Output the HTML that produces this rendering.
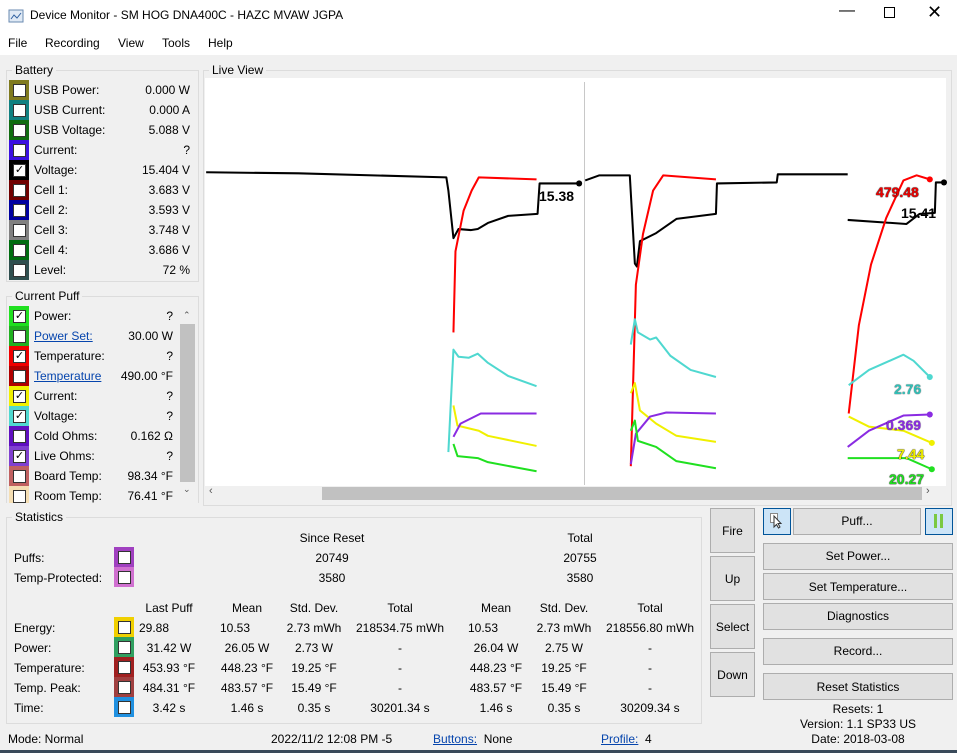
<!DOCTYPE html>
<html><head><meta charset="utf-8"><style>
*{box-sizing:border-box;margin:0;padding:0}
body{width:957px;height:753px;background:#f0f0f0;font-family:"Liberation Sans",sans-serif;font-size:12px;color:#000;position:relative;overflow:hidden}
.a{position:absolute;white-space:nowrap}
.r{text-align:right}
.c{text-align:center}
.grp{position:absolute;border:1px solid #dcdcdc}
.sw{position:absolute;width:20px;height:20px}
.sw i{position:absolute;left:4px;top:4px;width:13px;height:13px;background:#fff;border:1px solid #333;font-style:normal;font-size:11px;line-height:11px;text-align:center}
.lnk{color:#0645ad;text-decoration:underline}
.btn{position:absolute;background:#e1e1e1;border:1px solid #adadad;text-align:center}
.lbl{font-weight:bold;font-size:14px}
</style></head><body>
<div class="a" style="left:0;top:0;width:957px;height:31px;background:#fff"></div>
<svg class="a" style="left:8px;top:8px" width="16" height="16"><rect x="1" y="2" width="14" height="12" fill="#dfe9f5" stroke="#6a8ab0"/><polyline points="3,11 6,7 9,10 13,5" fill="none" stroke="#3060a0"/></svg>
<div class="a" style="left:30px;top:8px;font-size:12px">Device Monitor - SM HOG DNA400C - HAZC MVAW JGPA</div>
<div class="a" style="left:839px;top:2px;font-size:16px">&#8212;</div>
<div class="a" style="left:884px;top:7px;width:11px;height:11px;border:1px solid #000"></div>
<div class="a" style="left:927px;top:2px;font-size:18px">&#10005;</div>
<div class="a" style="left:0;top:31px;width:957px;height:24px;background:#fff"></div>
<div class="a" style="left:8px;top:36px">File</div>
<div class="a" style="left:45px;top:36px">Recording</div>
<div class="a" style="left:118px;top:36px">View</div>
<div class="a" style="left:162px;top:36px">Tools</div>
<div class="a" style="left:208px;top:36px">Help</div>

<div class="grp" style="left:6px;top:70px;width:193px;height:212px"></div>
<div class="a" style="left:12px;top:63px;background:#f0f0f0;padding:0 3px">Battery</div>
<div class="grp" style="left:6px;top:296px;width:193px;height:210px"></div>
<div class="a" style="left:12px;top:289px;background:#f0f0f0;padding:0 3px">Current Puff</div>
<div class="a" style="left:180px;top:309px;width:15px;height:196px;background:#f0f0f0"></div>
<div class="a" style="left:180px;top:324px;width:15px;height:158px;background:#c1c1c1"></div>
<div class="a" style="left:183px;top:310px;font-size:9px;color:#555">&#8963;</div>
<div class="a" style="left:183px;top:484px;font-size:9px;color:#555">&#8964;</div>

<div id="bat"></div>

<div class="grp" style="left:203px;top:70px;width:749px;height:436px"></div>
<div class="a" style="left:209px;top:63px;background:#f0f0f0;padding:0 3px">Live View</div>
<div class="a" style="left:205px;top:78px;width:741px;height:408px;background:#fff"></div>
<div class="a" style="left:205px;top:486px;width:741px;height:16px;background:#f0f0f0"></div>
<div class="a" style="left:322px;top:487px;width:600px;height:13px;background:#c1c1c1"></div>
<div class="a" style="left:209px;top:485px;font-size:11px;color:#555">&#8249;</div>
<div class="a" style="left:926px;top:485px;font-size:11px;color:#555">&#8250;</div>
<svg class="a" style="left:0;top:0" width="957" height="486">
<line x1="584.5" y1="82" x2="584.5" y2="485" stroke="#c8c8c8"/>
<g transform="translate(420,150) scale(1.0135) translate(-420,-150)">
<g fill="none" stroke-width="2" stroke-linejoin="round">
<polyline stroke="#000" points="209,172 300,173 446,177 448,190 453,237 458,228 470,229 477,228 487,222 507,215 536,213 538,183 577,183"/>
<polyline stroke="#000" points="583,180 597,175 627,175 632,262 634,265 637,240 653,232 673,218 712,213 713,183 772,182 773,174 842,174"/>
<polyline stroke="#000" points="842,219 900,223 913,213 928,212 929,182 937,182"/>
<polyline stroke="#f00" points="453,330 455,250 463,210 471,190 478,177 535,179"/>
<polyline stroke="#f00" points="628,462 633,283 640,233 650,190 660,175 712,179"/>
<polyline stroke="#f00" points="843,410 853,323 865,263 880,217 897,180 910,175 923,179"/>
<polyline stroke="#4fd8d0" points="448,448 453,347 458,354 468,355 477,351 487,360 507,373 535,383"/>
<polyline stroke="#4fd8d0" points="628,342 632,317 635,330 647,337 653,335 667,353 687,367 712,374"/>
<polyline stroke="#4fd8d0" points="843,382 863,367 897,352 907,358 923,374"/>
<polyline stroke="#f0f000" points="453,402 457,422 478,427 487,432 535,442"/>
<polyline stroke="#f0f000" points="628,390 632,380 637,407 653,420 673,432 712,438"/>
<polyline stroke="#f0f000" points="843,413 863,423 897,427 925,439"/>
<polyline stroke="#8a2be2" points="453,433 460,420 480,410 535,410"/>
<polyline stroke="#8a2be2" points="628,460 633,430 647,413 663,409 712,410"/>
<polyline stroke="#8a2be2" points="842,443 863,427 897,412 923,411"/>
<polyline stroke="#20e020" points="453,440 457,452 477,454 487,458 535,467"/>
<polyline stroke="#20e020" points="628,427 632,417 635,437 653,443 673,457 712,464"/>
<polyline stroke="#20e020" points="842,454 900,454 925,465"/>
</g>
<circle cx="577" cy="183" r="3"/><circle cx="923" cy="179" r="3" fill="#f00"/><circle cx="937" cy="182" r="3"/>
<circle cx="923" cy="374" r="3" fill="#4fd8d0"/><circle cx="925" cy="439" r="3" fill="#f0f000"/><circle cx="923" cy="411" r="3" fill="#8a2be2"/><circle cx="925" cy="465" r="3" fill="#20e020"/>
</g>
</svg>
<div class="a lbl" style="left:539px;top:188px">15.38</div>
<div class="a lbl" style="left:876px;top:184px;color:#e00;text-shadow:0 0 1px #000,0 0 1px #000">479.48</div>
<div class="a lbl" style="left:901px;top:205px">15.41</div>
<div class="a lbl" style="left:894px;top:381px;color:#30c0b8;text-shadow:0 0 1px #000">2.76</div>
<div class="a lbl" style="left:886px;top:417px;color:#8a2be2;text-shadow:0 0 1px #000">0.369</div>
<div class="a lbl" style="left:897px;top:446px;color:#f0f000;text-shadow:0 0 1px #000,0 0 1px #000">7.44</div>
<div class="a lbl" style="left:889px;top:471px;color:#20e020;text-shadow:0 0 1px #000,0 0 1px #000">20.27</div>

<div class="grp" style="left:6px;top:517px;width:696px;height:207px"></div>
<div class="a" style="left:12px;top:510px;background:#f0f0f0;padding:0 3px">Statistics</div>
<div id="st"></div>

<div class="btn" style="left:710px;top:508px;width:45px;height:45px;line-height:44px">Fire</div>
<div class="btn" style="left:710px;top:556px;width:45px;height:45px;line-height:44px">Up</div>
<div class="btn" style="left:710px;top:604px;width:45px;height:45px;line-height:44px">Select</div>
<div class="btn" style="left:710px;top:652px;width:45px;height:45px;line-height:44px">Down</div>
<div class="btn" style="left:763px;top:508px;width:28px;height:27px;background:#cce4f7;border-color:#005499"></div>
<svg class="a" style="left:770px;top:513px" width="14" height="16"><rect x="0.5" y="0.5" width="7" height="9" fill="#fff" stroke="#888"/><path d="M4 3 L4 14 L6.5 11.5 L8.5 15 L10 14 L8 10.5 L11 10.5 Z" fill="#fff" stroke="#333"/></svg>
<div class="btn" style="left:793px;top:508px;width:128px;height:27px;line-height:25px">Puff...</div>
<div class="btn" style="left:925px;top:508px;width:28px;height:27px;background:#cce4f7;border-color:#005499"></div>
<div class="a" style="left:934px;top:514px;width:3px;height:14px;background:#7ac943"></div>
<div class="a" style="left:940px;top:514px;width:3px;height:14px;background:#7ac943"></div>
<div class="btn" style="left:763px;top:543px;width:190px;height:27px;line-height:25px">Set Power...</div>
<div class="btn" style="left:763px;top:573px;width:190px;height:27px;line-height:27px">Set Temperature...</div>
<div class="btn" style="left:763px;top:603px;width:190px;height:27px;line-height:25px">Diagnostics</div>
<div class="btn" style="left:763px;top:638px;width:190px;height:27px;line-height:25px">Record...</div>
<div class="btn" style="left:763px;top:673px;width:190px;height:27px;line-height:27px">Reset Statistics</div>
<div class="a c" style="left:763px;top:702px;width:190px;line-height:15px">Resets: 1<br>Version: 1.1 SP33 US<br>Date: 2018-03-08</div>

<div class="a" style="left:8px;top:732px">Mode: Normal</div>
<div class="a" style="left:271px;top:732px">2022/11/2 12:08 PM -5</div>
<div class="a" style="left:433px;top:732px"><span class="lnk">Buttons:</span>&nbsp; None</div>
<div class="a" style="left:601px;top:732px"><span class="lnk">Profile:</span>&nbsp; 4</div>
<div class="a" style="left:0;top:750px;width:957px;height:3px;background:#3a4a5a"></div>

<script>
function sw(x,y,col,chk){return '<div class="sw" style="left:'+x+'px;top:'+y+'px;background:'+col+'"><i>'+(chk?'&#10003;':'')+'</i></div>';}
var h='';
var b=[['USB Power:','0.000 W','#7f7a1e'],['USB Current:','0.000 A','#108080'],['USB Voltage:','5.088 V','#106c10'],['Current:','?','#3a10e0'],['Voltage:','15.404 V','#000',1],['Cell 1:','3.683 V','#700000'],['Cell 2:','3.593 V','#0000a0'],['Cell 3:','3.748 V','#808080'],['Cell 4:','3.686 V','#006c10'],['Level:','72 %','#2f4f4f']];
b.forEach(function(r,i){var y=80+i*20;h+=sw(9,y,r[2],r[3])+'<div class="a" style="left:34px;top:'+(y+3)+'px">'+r[0]+'</div><div class="a r" style="left:100px;width:90px;top:'+(y+3)+'px">'+r[1]+'</div>';});
var p=[['Power:','?','#20e020',1],['<span class="lnk">Power Set:</span>','30.00 W','#20b020'],['Temperature:','?','#f00000',1],['<span class="lnk">Temperature</span>','490.00 °F','#b00000'],['Current:','?','#f0f000',1],['Voltage:','?','#50d8d0',1],['Cold Ohms:','0.162 Ω','#6010c0'],['Live Ohms:','?','#8040d0',1],['Board Temp:','98.34 °F','#c06060'],['Room Temp:','76.41 °F','#f5deb3']];
p.forEach(function(r,i){var y=306+i*20;h+=sw(9,y,r[2],r[3])+'<div class="a" style="left:34px;top:'+(y+3)+'px">'+r[0]+'</div><div class="a r" style="left:83px;width:90px;top:'+(y+3)+'px">'+r[1]+'</div>';});
h+='<div class="a" style="left:0;top:503px;width:200px;height:6px;background:#f0f0f0"></div>';
document.getElementById('bat').outerHTML=h;
var s='';
function t(x,y,tx,al){s+='<div class="a" style="left:'+(al?x-60:x)+'px;width:'+(al?120:'auto')+'px;top:'+y+'px;text-align:'+(al?'center':'left')+'">'+tx+'</div>';}
t(332,531,'Since Reset',1);t(580,531,'Total',1);
t(14,551,'Puffs:');t(14,571,'Temp-Protected:');
s+=sw(114,547,'#a040c0')+sw(114,567,'#d070d0');
t(332,551,'20749',1);t(580,551,'20755',1);t(332,571,'3580',1);t(580,571,'3580',1);
var cx=[169,247,314,400,496,564,650];
['Last Puff','Mean','Std. Dev.','Total','Mean','Std. Dev.','Total'].forEach(function(v,i){t(cx[i],601,v,1);});
var rows=[['Energy:','#f0d000',['29.88','10.53','2.73 mWh','218534.75 mWh','10.53','2.73 mWh','218556.80 mWh']],
['Power:','#30a060',['31.42 W','26.05 W','2.73 W','-','26.04 W','2.75 W','-']],
['Temperature:','#a02020',['453.93 °F','448.23 °F','19.25 °F','-','448.23 °F','19.25 °F','-']],
['Temp. Peak:','#a04040',['484.31 °F','483.57 °F','15.49 °F','-','483.57 °F','15.49 °F','-']],
['Time:','#2090e0',['3.42 s','1.46 s','0.35 s','30201.34 s','1.46 s','0.35 s','30209.34 s']]];
rows.forEach(function(r,i){var y=621+i*20;t(14,y,r[0]);s+=sw(114,y-4,r[1]);r[2].forEach(function(v,j){if(i==0&&(j==0||j==1||j==4))t(j==0?139:j==1?220:468,y,v);else t(cx[j],y,v,1);});});
document.getElementById('st').outerHTML=s;
</script>
</body></html>
